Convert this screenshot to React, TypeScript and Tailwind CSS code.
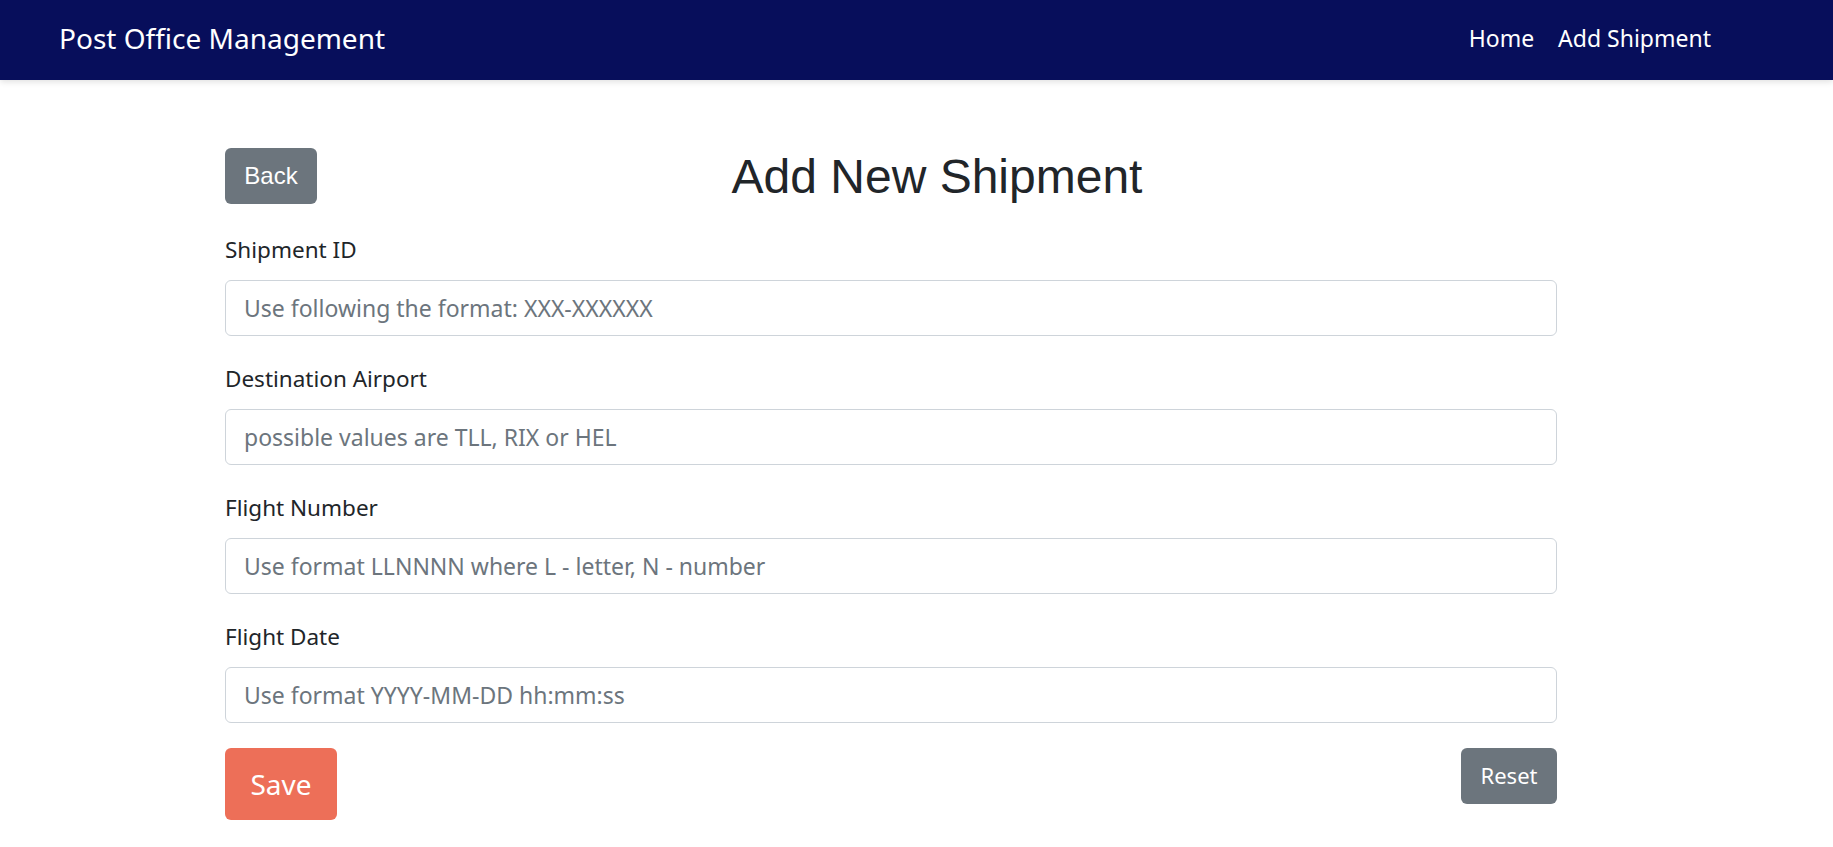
import React from "react";

const fields = [
  { label: "Shipment ID", placeholder: "Use following the format: XXX-XXXXXX" },
  { label: "Destination Airport", placeholder: "possible values are TLL, RIX or HEL" },
  { label: "Flight Number", placeholder: "Use format LLNNNN where L - letter, N - number" },
  { label: "Flight Date", placeholder: "Use format YYYY-MM-DD hh:mm:ss" },
];

export default function App() {
  return (
    <div className="min-h-screen bg-white font-['Segoe_UI','Noto_Sans',sans-serif] text-[#212529]">
      <nav className="relative z-10 flex h-[80px] items-center justify-between bg-[#070e5b] pb-[5px] pl-[59px] pr-[110px] shadow-[0_2px_6px_rgba(0,0,0,0.12)]">
        <span className="text-[28px] leading-[42px] text-white">Post Office Management</span>
        <div className="flex items-center">
          <a className="px-[12px] text-[23px] leading-[36px] text-white">Home</a>
          <a className="px-[12px] text-[23px] leading-[36px] text-white">Add Shipment</a>
        </div>
      </nav>
      <main className="ml-[225px] w-[1332px] pt-[68px]">
        <div className="flex items-start">
          <button className="h-[56px] w-[92px] rounded-[6px] bg-[#6c757d] font-['Liberation_Sans',Arial,sans-serif] text-[24px] text-white">
            Back
          </button>
          <h1 className="flex-1 text-center font-['Liberation_Sans',Arial,sans-serif] text-[48px] leading-[1.2] text-[#212529]">
            Add New Shipment
          </h1>
        </div>
        <form className="mt-[26px]">
          {fields.map((f) => (
            <div key={f.label} className="mb-[25px]">
              <label className="mb-[12px] block text-[22.5px] leading-[36px] text-[#212529]">{f.label}</label>
              <input
                type="text"
                placeholder={f.placeholder}
                className="block h-[56px] w-full rounded-[6px] border border-[#ced4da] bg-white px-[18px] text-[23px] text-[#212529] outline-none placeholder:text-[#6c757d]"
              />
            </div>
          ))}
          <div className="flex items-start justify-between">
            <button
              type="button"
              className="h-[72px] w-[112px] rounded-[6px] bg-[#ed6f58] text-[28px] text-white"
            >
              Save
            </button>
            <button
              type="button"
              className="h-[56px] w-[96px] rounded-[6px] bg-[#6c757d] text-[22px] text-white"
            >
              Reset
            </button>
          </div>
        </form>
      </main>
    </div>
  );
}
